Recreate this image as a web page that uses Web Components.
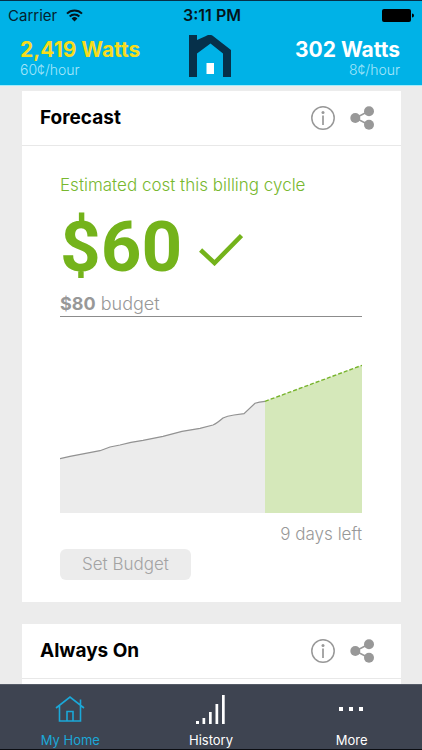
<!DOCTYPE html>
<html lang="en">
<head>
<meta charset="UTF-8">
<meta name="viewport" content="width=device-width, initial-scale=1">
<title>My Home</title>
<style>
    body {
        margin: 0;
        font-family: Inter, "Liberation Sans", sans-serif;
        background: #ececec;
    }
</style>
</head>
<body>

<home-app>
    <status-bar slot="top" carrier="Carrier" time="3:11 PM"></status-bar>
    <power-header slot="top">
        <watt-reading class="now" watts="2,419 Watts" cost="60¢/hour"></watt-reading>
        <home-logo slot="logo"></home-logo>
        <watt-reading slot="right" watts="302 Watts" cost="8¢/hour"></watt-reading>
    </power-header>

    <info-card heading="Forecast">
        <forecast-panel cost="$60" budget="$80" days="9 days left"></forecast-panel>
    </info-card>
    <info-card heading="Always On"></info-card>

    <tab-bar slot="bottom">
        <tab-item label="My Home" active>
            <svg width="30" height="30" viewBox="0 0 30 30" fill="none" stroke="currentColor" stroke-width="1.6">
                <path d="M1 14 15 3l14 11M4.500 12v15h21V12M25.500 11V5.500M12 27v-9.500h6V27"/>
            </svg>
        </tab-item>
        <tab-item label="History">
            <svg width="30" height="30" viewBox="0 0 30 30" fill="currentColor">
                <path d="M0 27h3v3H0zM6.500 24h2.700v6H6.500zM13 18h2.700v12H13zM19.500 10h2.700v20h-2.700zM26 1h2.700v29H26z"/>
            </svg>
        </tab-item>
        <tab-item label="More">
            <svg width="30" height="30" viewBox="0 0 30 30" fill="currentColor">
                <path d="M2 13h4v4H2zM12 13h4v4h-4zM22 13h4v4h-4z"/>
            </svg>
        </tab-item>
    </tab-bar>
</home-app>

<script>
// PAGE FRAME
class HomeApp extends HTMLElement {
    constructor() {
        super();
        this.attachShadow({ mode: "open" });
    }

    connectedCallback() {
        this.shadowRoot.innerHTML = `
            <style>
                :host {
                    display: flex;
                    flex-direction: column;
                    height: 100vh;
                    box-sizing: border-box;
                    border-top: 1px solid #06304a;
                    border-bottom: 1px solid #0b0d12;
                }
                header {
                    background: #00b2e7;
                    border-bottom: 1px solid #a3ecfb;
                }
                main {
                    flex: 1;
                    min-height: 0;
                    overflow: hidden;
                    display: flex;
                    flex-direction: column;
                    gap: 22px;
                    padding: 5px 21px 0 22px;
                }
            </style>
            <header><slot name="top"></slot></header>
            <main><slot></slot></main>
            <slot name="bottom"></slot>
        `;
    }
}

class StatusBar extends HTMLElement {
    constructor() {
        super();
        this.attachShadow({ mode: "open" });
    }

    connectedCallback() {
        this.shadowRoot.innerHTML = `
            <style>
                :host {
                    display: grid;
                    grid-template-columns: 1fr auto 1fr;
                    align-items: center;
                    height: 28px;
                    padding: 0 8px;
                    color: #05222e;
                    font-size: 15px;
                }
                .carrier {
                    display: flex;
                    align-items: center;
                    gap: 9px;
                }
                .time {
                    padding-left: 2px;
                    font-size: 16px;
                    font-weight: 600;
                    color: #04151c;
                }
                .battery {
                    justify-self: end;
                }
                svg {
                    display: block;
                }
            </style>
            <span class="carrier">${this.getAttribute("carrier")}
                <svg width="17" height="13" viewBox="0 0 17 13" fill="none" stroke="#04151c" stroke-width="2">
                    <path d="M1 4.600a10.500 10.500 0 0 1 15 0M3.700 7.500a6.600 6.600 0 0 1 9.600 0"/>
                    <path d="M8.500 12.500 5.600 9.500a4.200 4.200 0 0 1 5.800 0z" fill="#04151c" stroke="none"/>
                </svg>
            </span>
            <span class="time">${this.getAttribute("time")}</span>
            <svg class="battery" width="32" height="13" viewBox="0 0 32 13">
                <rect x="0" y="0" width="29" height="13" rx="2"/>
                <path d="M30 4.500a2 2 0 0 1 0 4z"/>
            </svg>
        `;
    }
}

class PowerHeader extends HTMLElement {
    constructor() {
        super();
        this.attachShadow({ mode: "open" });
    }

    connectedCallback() {
        this.shadowRoot.innerHTML = `
            <style>
                :host {
                    display: grid;
                    grid-template-columns: 1fr auto 1fr;
                    padding: 6px 22px 7px 20px;
                }
                .right {
                    text-align: right;
                }
            </style>
            <div><slot></slot></div>
            <slot name="logo"></slot>
            <div class="right"><slot name="right"></slot></div>
        `;
    }
}

class WattReading extends HTMLElement {
    constructor() {
        super();
        this.attachShadow({ mode: "open" });
    }

    connectedCallback() {
        this.shadowRoot.innerHTML = `
            <style>
                :host {
                    display: block;
                    padding-top: 2px;
                    color: #ffffff;
                    white-space: nowrap;
                }
                :host(.now) {
                    color: #f7dc1b;
                }
                .watts {
                    font-size: 21px;
                    line-height: 25px;
                    font-weight: 700;
                }
                .cost {
                    font-size: 14px;
                    line-height: 16px;
                    font-weight: 300;
                    color: #a5e6fa;
                }
            </style>
            <div class="watts">${this.getAttribute("watts")}</div>
            <div class="cost">${this.getAttribute("cost")}</div>
        `;
    }
}

class HomeLogo extends HTMLElement {
    constructor() {
        super();
        this.attachShadow({ mode: "open" });
    }

    connectedCallback() {
        this.shadowRoot.innerHTML = `
            <style>
                :host {
                    display: block;
                }
                svg {
                    display: block;
                }
            </style>
            <svg width="42" height="42" viewBox="0 0 42 42" role="img" aria-label="Home">
                <path fill="#06304a" d="M0 0h8v5L17 .9q4-2 7 0L42 15V42h-8V18.500L21.500 8.500 8 18.500V42H0z"/>
                <path fill="#ffffff" d="M17.500 28H25v11h-7.500z"/>
            </svg>
        `;
    }
}

// CARD WITH TITLE AND ITS TWO BUTTONS
class InfoCard extends HTMLElement {
    constructor() {
        super();
        this.attachShadow({ mode: "open" });
    }

    connectedCallback() {
        this.shadowRoot.innerHTML = `
            <style>
                :host {
                    display: block;
                    flex: none;
                    min-height: 80px;
                    background: #ffffff;
                }
                header {
                    display: flex;
                    align-items: center;
                    gap: 15px;
                    height: 54px;
                    padding: 0 27px 0 18px;
                    border-bottom: 1px solid #e8e8e8;
                }
                h2 {
                    flex: 1;
                    margin: 0;
                    font-size: 19px;
                    line-height: 24px;
                    font-weight: 700;
                    color: #000000;
                }
                button {
                    padding: 0;
                    border: 0;
                    background: none;
                    color: #989898;
                }
                svg {
                    display: block;
                }
            </style>
            <header>
                <h2>${this.getAttribute("heading")}</h2>
                <button type="button" aria-label="Info">
                    <svg width="24" height="24" viewBox="0 0 24 24">
                        <circle cx="12" cy="12" r="11.200" fill="none" stroke="currentColor" stroke-width="1.500"/>
                        <circle cx="12" cy="6.500" r="1.500" fill="currentColor"/>
                        <path d="M12 9.500v9.500" stroke="currentColor" stroke-width="1.700"/>
                    </svg>
                </button>
                <button type="button" aria-label="Share">
                    <svg width="24" height="24" viewBox="0 0 24 24" fill="currentColor">
                        <path d="M19 5 5.500 12 19 19" fill="none" stroke="currentColor" stroke-width="1.500"/>
                        <circle cx="5.300" cy="12" r="5"/>
                        <circle cx="19" cy="5.200" r="5"/>
                        <circle cx="19" cy="18.800" r="5"/>
                    </svg>
                </button>
            </header>
            <slot></slot>
        `;
    }
}

class ForecastPanel extends HTMLElement {
    constructor() {
        super();
        this.attachShadow({ mode: "open" });
    }

    connectedCallback() {
        this.shadowRoot.innerHTML = `
            <style>
                :host {
                    display: block;
                    padding: 27px 39px 22px 38px;
                    font-size: 17px;
                    font-weight: 300;
                    line-height: 24px;
                    color: #989898;
                }
                p {
                    margin: 0;
                }
                .label {
                    color: #78b82f;
                }
                .amount {
                    display: flex;
                    align-items: center;
                    gap: 17px;
                    padding-top: 5px;
                    color: #74b31b;
                    font-family: Roboto, "Liberation Sans", sans-serif;
                    font-size: 71px;
                    line-height: 90px;
                    font-weight: 700;
                }
                .amount svg {
                    margin-top: 6px;
                }
                .budget {
                    border-bottom: 1px solid #8c8c8c;
                    font-size: 18px;
                }
                .budget b {
                    font-weight: 700;
                }
                .chart {
                    display: block;
                    width: 100%;
                    margin-top: 43px;
                }
                .days {
                    margin-top: 9px;
                    text-align: right;
                }
                button {
                    display: block;
                    margin-top: 3px;
                    padding: 4px 22px;
                    border: 0;
                    border-radius: 6px;
                    background: #ececec;
                    color: #a3a3a3;
                    font: inherit;
                    line-height: 23px;
                }
            </style>
            <p class="label">Estimated cost this billing cycle</p>
            <p class="amount">${this.getAttribute("cost")}
                <svg width="44" height="32" viewBox="0 0 44 32" fill="none" stroke="currentColor" stroke-width="4.500">
                    <path d="M1.600 16 15.500 29 42.500 1.600"/>
                </svg>
            </p>
            <p class="budget"><b>${this.getAttribute("budget")}</b> budget</p>
            <svg class="chart" viewBox="0 0 302 153">
                <path fill="#ececec" d="M0 98.700 10 96.300 40 90.700 50 87 60 85 71 82.300 83 80.300 103 76.300 122 71.300 140 68.300 153 65 163 58 174 55 184 53.700 195 43.300 205 41.300V153H0z"/>
                <path fill="#d5e8ba" d="M205 41.300 302 5.300V153h-97z"/>
                <path fill="none" stroke="#929292" stroke-width="1.200" d="M0 98.700 10 96.300 40 90.700 50 87 60 85 71 82.300 83 80.300 103 76.300 122 71.300 140 68.300 153 65Q156 64 163 58 167 56 174 55L184 53.700 195 43.300Q199 41.800 205 41.300"/>
                <path fill="none" stroke="#77b32c" stroke-width="1.400" stroke-dasharray="4 2" d="M205 41.300 302 5.300"/>
            </svg>
            <p class="days">${this.getAttribute("days")}</p>
            <button type="button">Set Budget</button>
        `;
    }
}

// BOTTOM NAVIGATION
class TabBar extends HTMLElement {
    constructor() {
        super();
        this.attachShadow({ mode: "open" });
    }

    connectedCallback() {
        this.shadowRoot.innerHTML = `
            <style>
                :host {
                    display: block;
                    background: #3e4451;
                    border-top: 1px solid #555b67;
                }
                nav {
                    display: grid;
                    grid-template-columns: repeat(3, 1fr);
                }
            </style>
            <nav><slot></slot></nav>
        `;
    }
}

class TabItem extends HTMLElement {
    constructor() {
        super();
        this.attachShadow({ mode: "open" });
    }

    connectedCallback() {
        this.shadowRoot.innerHTML = `
            <style>
                :host {
                    display: block;
                    color: #ffffff;
                }
                :host([active]) {
                    color: #1ba8d8;
                }
                a {
                    display: flex;
                    flex-direction: column;
                    align-items: center;
                    gap: 8px;
                    padding: 9px 0 0;
                    color: inherit;
                    font-size: 13px;
                    line-height: 17px;
                    text-decoration: none;
                }
            </style>
            <a href="#"><slot></slot>${this.getAttribute("label")}</a>
        `;
    }
}

customElements.define("home-app", HomeApp);
customElements.define("status-bar", StatusBar);
customElements.define("power-header", PowerHeader);
customElements.define("watt-reading", WattReading);
customElements.define("home-logo", HomeLogo);
customElements.define("info-card", InfoCard);
customElements.define("forecast-panel", ForecastPanel);
customElements.define("tab-bar", TabBar);
customElements.define("tab-item", TabItem);
</script>
</body>
</html>
